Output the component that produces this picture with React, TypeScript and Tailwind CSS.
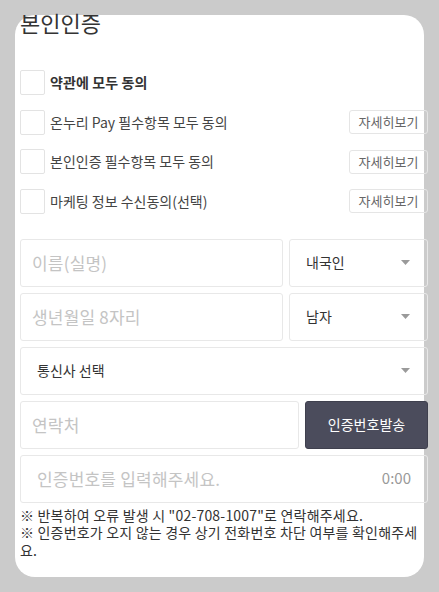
const font = "font-['Noto_Sans_CJK_KR','Noto_Sans',sans-serif]";

const terms = [
  { label: "온누리 Pay 필수항목 모두 동의" },
  { label: "본인인증 필수항목 모두 동의" },
  { label: "마케팅 정보 수신동의(선택)" },
];

const Caret = () => (
  <svg width="9" height="5" viewBox="0 0 9 5" className="shrink-0">
    <path d="M0 0 H9 L4.5 5 Z" fill="#9a9a9a" />
  </svg>
);

const Checkbox = () => (
  <span className="h-[25px] w-[25px] shrink-0 rounded-[2px] border border-[#e3e3e3] bg-white" />
);

const App = () => {
  return (
    <div className={`min-h-[592px] bg-[#cbcbcb] pl-[15px] pt-[15px] ${font}`}>
      <div className="flow-root h-[562px] w-[409px] rounded-[20px] bg-white">
        <div className="-mt-[8px] ml-[5px] w-[408px]">
          <h1 className="text-[22px] leading-[30px] font-normal text-[#333]">본인인증</h1>

          <div className="mt-[33px] flex flex-col gap-[14.5px]">
            <label className="flex h-[25px] items-center gap-[5px]">
              <Checkbox />
              <span className="text-[14px] font-bold tracking-[0.1px] text-[#333]">
                약관에 모두 동의
              </span>
            </label>
            {terms.map((t) => (
              <div key={t.label} className="flex h-[25px] items-center justify-between">
                <label className="flex items-center gap-[5px]">
                  <Checkbox />
                  <span className="text-[14px] text-[#444]">{t.label}</span>
                </label>
                <button className="flex h-[24px] w-[79px] items-center justify-center rounded-[3px] border border-[#e5e5e5] text-[13px] text-[#666]">
                  자세히보기
                </button>
              </div>
            ))}
          </div>

          <div className="mt-[25px] flex flex-col gap-[6px]">
            <div className="flex gap-[6px]">
              <div className="flex h-[48px] w-[263px] items-center rounded-[3px] border border-[#e8e8e8] px-[11px] text-[17px] tracking-[0.2px] text-[#c4c4c4]">
                이름(실명)
              </div>
              <div className="flex h-[48px] flex-1 items-center justify-between rounded-[3px] border border-[#e8e8e8] pl-[16px] pr-[17px] text-[14px] text-[#333]">
                내국인
                <Caret />
              </div>
            </div>
            <div className="flex gap-[6px]">
              <div className="flex h-[48px] w-[263px] items-center rounded-[3px] border border-[#e8e8e8] px-[11px] text-[17px] tracking-[0.2px] text-[#c4c4c4]">
                생년월일 8자리
              </div>
              <div className="flex h-[48px] flex-1 items-center justify-between rounded-[3px] border border-[#e8e8e8] pl-[16px] pr-[17px] text-[14px] text-[#333]">
                남자
                <Caret />
              </div>
            </div>
            <div className="flex h-[48px] items-center justify-between rounded-[3px] border border-[#e8e8e8] pl-[16px] pr-[17px] text-[14px] text-[#333]">
              통신사 선택
              <Caret />
            </div>
            <div className="flex gap-[6px]">
              <div className="flex h-[48px] w-[279px] items-center rounded-[3px] border border-[#e8e8e8] px-[11px] text-[17px] tracking-[0.2px] text-[#c4c4c4]">
                연락처
              </div>
              <button className="flex h-[48px] flex-1 items-center justify-center rounded-[3px] border border-[#3f404e] bg-[#4b4c5c] text-[14px] text-white">
                인증번호발송
              </button>
            </div>
            <div className="flex h-[48px] items-center justify-between rounded-[3px] border border-[#e8e8e8] pl-[16px] pr-[16px]">
              <span className="text-[17px] tracking-[0.2px] text-[#c4c4c4]">인증번호를 입력해주세요.</span>
              <span className="text-[15px] text-[#999]">0:00</span>
            </div>
          </div>

          <p className="mt-[4px] text-[14px] leading-[17.5px] tracking-[0.2px] text-[#333]">
            ※ 반복하여 오류 발생 시 "02-708-1007"로 연락해주세요.
            <br />※ 인증번호가 오지 않는 경우 상기 전화번호 차단 여부를 확인해주세요.
          </p>
        </div>
      </div>
    </div>
  );
};

export default App;
